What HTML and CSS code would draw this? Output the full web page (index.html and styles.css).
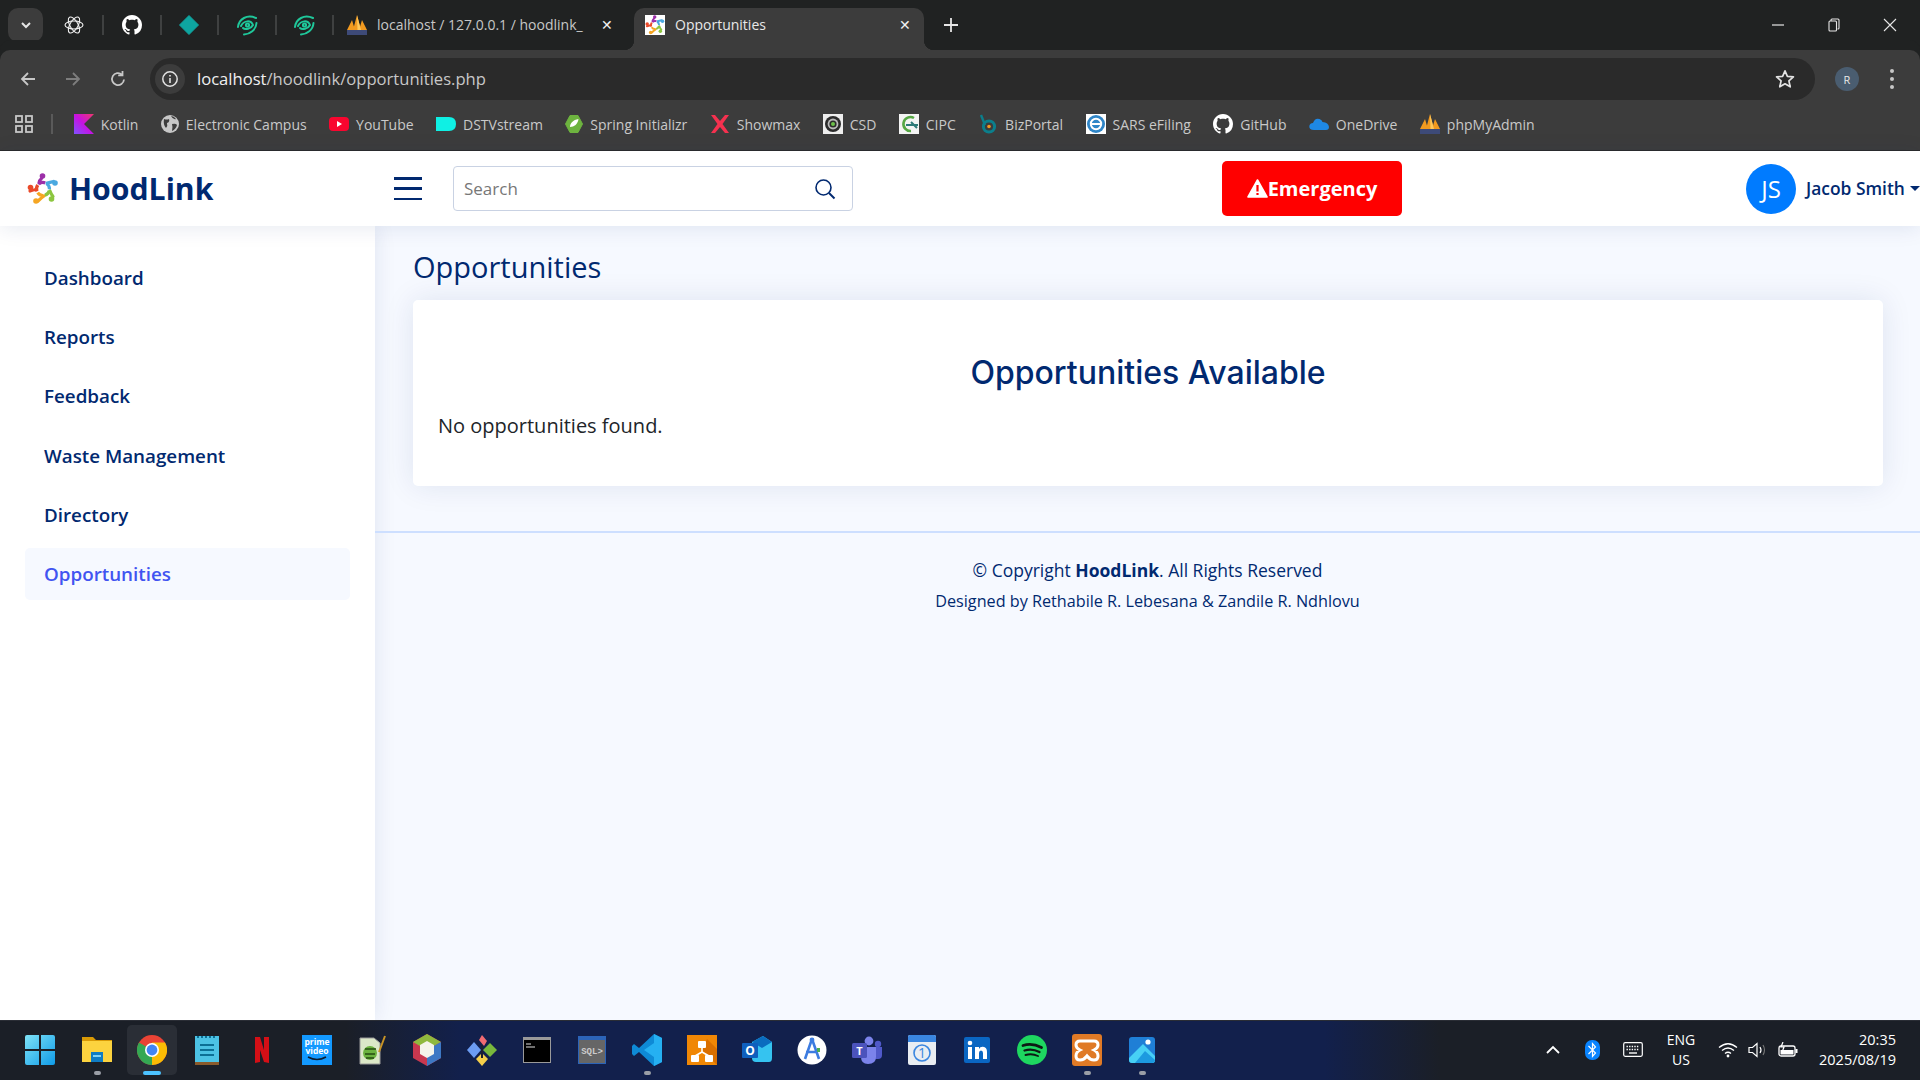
FILE: index.html
```html
<!DOCTYPE html>
<html lang="en">
<head>
    <meta charset="UTF-8">
    <title>Opportunities</title>
    <link rel="stylesheet" href="styles.css">
</head>
<body>
    <!-- Shared icons -->
    <svg class="icon-defs" aria-hidden="true">
        <symbol id="i-logo" viewBox="0 0 32 32">
            <g fill="none" stroke-width="3.2" stroke-linecap="round">
                <path stroke="#9c2fa8" d="M12 10 Q12.5 7 14.5 5.5"/>
                <path stroke="#4aa8e0" d="M20 10 Q23 9.5 26.5 8.5"/>
                <path stroke="#8cc63f" d="M23 18 Q24 21 26 23.5"/>
                <path stroke="#f5a623" d="M17 23 Q14 25 11 28"/>
                <path stroke="#ea4a2a" d="M9 16.5 Q6 17 3 18"/>
            </g>
            <g fill="none" stroke-width="3.2">
                <circle cx="16" cy="16" r="6.5" stroke="#9c2fa8" stroke-dasharray="6.5 34.3" transform="rotate(-130 16 16)"/>
                <circle cx="16" cy="16" r="6.5" stroke="#4aa8e0" stroke-dasharray="6.5 34.3" transform="rotate(-58 16 16)"/>
                <circle cx="16" cy="16" r="6.5" stroke="#8cc63f" stroke-dasharray="6.5 34.3" transform="rotate(14 16 16)"/>
                <circle cx="16" cy="16" r="6.5" stroke="#f5a623" stroke-dasharray="6.5 34.3" transform="rotate(86 16 16)"/>
                <circle cx="16" cy="16" r="6.5" stroke="#ea4a2a" stroke-dasharray="6.5 34.3" transform="rotate(158 16 16)"/>
            </g>
            <circle cx="15.5" cy="3" r="2.8" fill="#9c2fa8"/>
            <circle cx="28" cy="10" r="2.8" fill="#4aa8e0"/>
            <circle cx="24.5" cy="26" r="2.8" fill="#8cc63f"/>
            <circle cx="9" cy="28" r="2.8" fill="#f5a623"/>
            <circle cx="3.5" cy="14.5" r="2.8" fill="#ea4a2a"/>
        </symbol>
        <symbol id="i-github" viewBox="0 0 16 16">
            <path fill="#fff" d="M8 0C3.58 0 0 3.58 0 8c0 3.54 2.29 6.53 5.47 7.59.4.07.55-.17.55-.38 0-.19-.01-.82-.01-1.49-2.01.37-2.53-.49-2.69-.94-.09-.23-.48-.94-.82-1.13-.28-.15-.68-.52-.01-.53.63-.01 1.08.58 1.23.82.72 1.21 1.87.87 2.33.66.07-.52.28-.87.51-1.07-1.78-.2-3.64-.89-3.64-3.95 0-.87.31-1.59.82-2.15-.08-.2-.36-1.02.08-2.12 0 0 .67-.21 2.2.82.64-.18 1.32-.27 2-.27.68 0 1.36.09 2 .27 1.53-1.04 2.2-.82 2.2-.82.44 1.1.16 1.92.08 2.12.51.56.82 1.27.82 2.15 0 3.07-1.87 3.75-3.65 3.95.29.25.54.73.54 1.48 0 1.07-.01 1.93-.01 2.2 0 .21.15.46.55.38A8.013 8.013 0 0016 8c0-4.42-3.58-8-8-8z"/>
        </symbol>
        <symbol id="i-pma" viewBox="0 0 20 20">
            <path fill="#f29a1f" d="M0 15 L5 5 L8 15Z M6 15 L10 0 L14 15Z M12 15 L15 5 L20 15Z"/>
            <path fill="#ffc85a" d="M10 0 L14 15 L10.5 15Z"/>
            <rect y="15" width="20" height="5" fill="#3d4a78"/>
        </symbol>
        <symbol id="i-eye" viewBox="0 0 22 22">
            <g fill="none" stroke="#1fc79a" stroke-width="2" stroke-linecap="round">
                <path d="M2 13 C3 5 11 0 20 4"/>
                <path d="M20.5 9 C20 16 14 20 8 20.5"/>
                <path d="M5 12 C8 6 15 6 17 11 C15 15 9 16 7 14"/>
                <circle cx="11.5" cy="11" r="1.6"/>
            </g>
        </symbol>
    </svg>

    <!-- Browser tabs -->
    <div class="tabstrip">
        <button class="tab-search">
            <svg width="12" height="12" viewBox="0 0 12 12"><path d="M2 4 L6 8 L10 4" fill="none" stroke="#e6e6e6" stroke-width="2"/></svg>
        </button>
        <div class="pin">
            <svg width="20" height="20" viewBox="0 0 20 20"><g fill="none" stroke="#f2f2f2" stroke-width="1.1"><ellipse cx="10" cy="10" rx="9" ry="4"/><ellipse cx="10" cy="10" rx="9" ry="4" transform="rotate(60 10 10)"/><ellipse cx="10" cy="10" rx="9" ry="4" transform="rotate(120 10 10)"/></g></svg>
        </div>
        <span class="tab-sep"></span>
        <div class="pin"><svg width="20" height="20"><use href="#i-github"/></svg></div>
        <span class="tab-sep"></span>
        <div class="pin">
            <svg width="20" height="20" viewBox="0 0 20 20"><path d="M10 0.5 L19.5 10 L10 19.5 L0.5 10Z" fill="#0ea5a0" stroke="#0ea5a0" stroke-linejoin="round"/></svg>
        </div>
        <span class="tab-sep"></span>
        <div class="pin"><svg width="22" height="22"><use href="#i-eye"/></svg></div>
        <span class="tab-sep"></span>
        <div class="pin"><svg width="22" height="22"><use href="#i-eye"/></svg></div>
        <span class="tab-sep"></span>

        <div class="tab">
            <svg width="20" height="20"><use href="#i-pma"/></svg>
            <span class="tab-title tab-title-fade">localhost / 127.0.0.1 / hoodlink_</span>
            <span class="tab-close">&#10005;</span>
        </div>
        <div class="tab tab-active">
            <svg class="favicon" width="20" height="20"><use href="#i-logo"/></svg>
            <span class="tab-title">Opportunities</span>
            <span class="tab-close">&#10005;</span>
        </div>
        <svg class="new-tab" width="14" height="14" viewBox="0 0 14 14"><path d="M7 0 V14 M0 7 H14" stroke="#e6e6e6" stroke-width="1.8"/></svg>

        <div class="window-controls">
            <svg width="14" height="14" viewBox="0 0 14 14"><path d="M1 7 H13" stroke="#e6e6e6" stroke-width="1.2"/></svg>
            <svg width="14" height="14" viewBox="0 0 14 14"><path d="M4 3 V2 Q4 1 5 1 H11 Q12 1 12 2 V10 Q12 11 11 11 H10.5 M2 4 Q2 3 3 3 H8.5 Q9.5 3 9.5 4 V12 Q9.5 13 8.5 13 H3 Q2 13 2 12Z" fill="none" stroke="#e6e6e6" stroke-width="1.1"/></svg>
            <svg width="14" height="14" viewBox="0 0 14 14"><path d="M1 1 L13 13 M13 1 L1 13" stroke="#e6e6e6" stroke-width="1.1"/></svg>
        </div>
    </div>

    <!-- Address bar -->
    <div class="toolbar">
        <svg class="nav-btn" width="18" height="18" viewBox="0 0 18 18"><path d="M16 9 H3 M9 3 L3 9 L9 15" fill="none" stroke="#c7c7c7" stroke-width="1.8"/></svg>
        <svg class="nav-btn" width="18" height="18" viewBox="0 0 18 18"><path d="M2 9 H15 M9 3 L15 9 L9 15" fill="none" stroke="#7d7d7d" stroke-width="1.8"/></svg>
        <svg class="nav-btn" width="18" height="18" viewBox="0 0 18 18"><path d="M15 9.5 A6 6 0 1 1 13 4.6 M13.5 1 V5.3 H9.2" fill="none" stroke="#c7c7c7" stroke-width="1.8"/></svg>
        <div class="omnibox">
            <span class="site-info">
                <svg width="18" height="18" viewBox="0 0 18 18"><circle cx="9" cy="9" r="7.2" fill="none" stroke="#e3e3e3" stroke-width="1.5"/><path d="M9 8 V13 M9 5 V6.6" stroke="#e3e3e3" stroke-width="1.6"/></svg>
            </span>
            <span class="url"><b>localhost</b>/hoodlink/opportunities.php</span>
            <svg class="star" width="20" height="20" viewBox="0 0 20 20"><path d="M10 1.8 L12.4 7.3 L18.4 7.9 L13.9 11.9 L15.2 17.8 L10 14.8 L4.8 17.8 L6.1 11.9 L1.6 7.9 L7.6 7.3Z" fill="none" stroke="#e3e3e3" stroke-width="1.7" stroke-linejoin="round"/></svg>
        </div>
        <span class="profile">R</span>
        <span class="menu-dots"><i></i><i></i><i></i></span>
    </div>

    <!-- Bookmarks -->
    <div class="bookmarks">
        <svg class="apps" width="18" height="18" viewBox="0 0 18 18"><g fill="none" stroke="#c7c7c7" stroke-width="1.8"><rect x="1" y="1" width="6" height="6"/><rect x="11" y="1" width="6" height="6"/><rect x="1" y="11" width="6" height="6"/><rect x="11" y="11" width="6" height="6"/></g></svg>
        <span class="bm-sep"></span>
        <a class="bm bm-kotlin">
            <svg width="20" height="20" viewBox="0 0 20 20"><defs><linearGradient id="kt" x1="0" y1="1" x2="1" y2="0"><stop offset="0" stop-color="#7f52ff"/><stop offset=".5" stop-color="#c711e1"/><stop offset="1" stop-color="#f0386b"/></linearGradient></defs><path d="M0 0 H20 L10 10 L20 20 H0Z" fill="url(#kt)"/></svg>
            Kotlin</a>
        <a class="bm">
            <svg width="18" height="18" viewBox="0 0 18 18"><circle cx="9" cy="9" r="9" fill="#c7c7c7"/><path d="M3 4 Q6 5 8 4 Q9 7 6 8 Q7 11 5 13 Q2 10 3 4Z M11 9 Q15 8 16 10 Q15 14 11 16 Q12 12 11 9Z M10 1 Q13 1 15 4 Q12 5 10 1Z" fill="#3c3c3c"/></svg>
            Electronic Campus</a>
        <a class="bm">
            <svg width="20" height="16" viewBox="0 0 20 16"><rect width="20" height="14" y="1" rx="4" fill="#f9062f"/><path d="M8 5 L13 8 L8 11Z" fill="#fff"/></svg>
            YouTube</a>
        <a class="bm">
            <svg width="20" height="14" viewBox="0 0 20 14"><path d="M0 0 H13 Q20 0 20 7 Q20 14 13 14 H0Z" fill="#0ff0e4"/></svg>
            DSTVstream</a>
        <a class="bm">
            <svg width="18" height="18" viewBox="0 0 18 18"><path d="M5 0.5 H13 L17.5 9 L13 17.5 H5 L0.5 9Z" fill="#6db33f" stroke="#6db33f" stroke-linejoin="round"/><path d="M13.5 4 C13 9 9 12 5 12 C5 8 8 5 13.5 4Z" fill="#fff"/></svg>
            Spring Initializr</a>
        <a class="bm">
            <svg width="20" height="20" viewBox="0 0 20 20"><path d="M1 1 H5 L10 7 L15 1 H19 L12.5 10 L19 19 H15 L10 13 L5 19 H1 L7.5 10Z" fill="#f5314f"/></svg>
            Showmax</a>
        <a class="bm">
            <svg width="20" height="20" viewBox="0 0 20 20"><rect width="20" height="20" fill="#eee"/><circle cx="10" cy="10" r="8" fill="#2b2b2b"/><circle cx="10" cy="10" r="5.4" fill="#bbb"/><circle cx="10" cy="10" r="3.6" fill="#2b2b2b"/><circle cx="10" cy="10" r="2" fill="#6cc04a"/></svg>
            CSD</a>
        <a class="bm">
            <svg width="20" height="20" viewBox="0 0 20 20"><rect width="20" height="20" fill="#f4f4f4"/><path d="M15 4 A7 7 0 1 0 12 17" fill="none" stroke="#57a845" stroke-width="2.6"/><path d="M7 11 H19 M12 8 L18 14" stroke="#2d7a78" stroke-width="2"/></svg>
            CIPC</a>
        <a class="bm">
            <svg width="20" height="20" viewBox="0 0 20 20"><path d="M3 1 L7 11" stroke="#0b7f8c" stroke-width="2.4" fill="none"/><circle cx="11" cy="12.5" r="5.6" fill="none" stroke="#0b7f8c" stroke-width="3"/><circle cx="11" cy="12.5" r="1.8" fill="#f29a1f"/></svg>
            BizPortal</a>
        <a class="bm bm-sars">
            <svg width="20" height="20" viewBox="0 0 20 20"><rect width="20" height="20" fill="#fff"/><circle cx="10" cy="10" r="9" fill="#2f86c8"/><circle cx="10" cy="10" r="5.2" fill="none" stroke="#fff" stroke-width="2"/><path d="M5 10 H15" stroke="#fff" stroke-width="2"/></svg>
            SARS eFiling</a>
        <a class="bm">
            <svg width="20" height="20"><use href="#i-github"/></svg>
            GitHub</a>
        <a class="bm">
            <svg width="20" height="16" viewBox="0 0 20 16"><path d="M5 14 Q0 14 0.3 10 Q1 7 4 7 Q6 1.5 10.5 3 Q13 4 13.5 6 Q19.5 6.5 20 11 Q20 14 17 14Z" fill="#1e88e5"/></svg>
            OneDrive</a>
        <a class="bm">
            <svg width="20" height="20"><use href="#i-pma"/></svg>
            phpMyAdmin</a>
    </div>

    <!-- Site header -->
    <header class="header">
        <a class="logo">
            <svg width="32" height="32"><use href="#i-logo"/></svg>
            <span>HoodLink</span>
        </a>
        <button class="menu-toggle"><i></i><i></i><i></i></button>
        <div class="search-bar">
            <span class="search-text">Search</span>
            <svg width="22" height="22" viewBox="0 0 22 22"><circle cx="9.5" cy="9.5" r="7.5" fill="none" stroke="#012970" stroke-width="1.6"/><path d="M15 15 L20.5 20.5" stroke="#012970" stroke-width="2"/></svg>
        </div>
        <button class="emergency">
            <svg width="21" height="19" viewBox="0 0 21 19"><path d="M10.5 1 L20 18 H1Z" fill="#fff" stroke="#fff" stroke-width="1.6" stroke-linejoin="round"/><path d="M10.5 6 V12.5 M10.5 14 V16" stroke="#f00" stroke-width="2.2"/></svg>Emergency
        </button>
        <div class="user">
            <span class="avatar">JS</span>
            <span class="user-name">Jacob Smith</span>
            <span class="caret"></span>
        </div>
    </header>

    <div class="app">
        <!-- Sidebar -->
        <nav class="sidebar">
            <a class="side-link">Dashboard</a>
            <a class="side-link">Reports</a>
            <a class="side-link">Feedback</a>
            <a class="side-link">Waste Management</a>
            <a class="side-link">Directory</a>
            <a class="side-link side-link-active">Opportunities</a>
        </nav>

        <main class="main">
            <div class="content">
                <h1 class="page-title">Opportunities</h1>
                <section class="card">
                    <h2 class="card-title">Opportunities Available</h2>
                    <p class="card-text">No opportunities found.</p>
                </section>
            </div>
            <footer class="footer">
                <div class="copyright">&copy; Copyright <strong>HoodLink</strong>. All Rights Reserved</div>
                <div class="credits">Designed by Rethabile R. Lebesana &amp; Zandile R. Ndhlovu</div>
            </footer>
        </main>
    </div>

    <!-- Windows taskbar -->
    <div class="taskbar">
        <div class="task-slot task-start">
            <svg width="32" height="32" viewBox="0 0 32 32"><defs><linearGradient id="win" x1="0" y1="0" x2="1" y2="1"><stop offset="0" stop-color="#7fe3f7"/><stop offset="1" stop-color="#0f9be8"/></linearGradient></defs><path d="M1 3 Q1 1 3 1 H15 V15 H1Z M17 1 H29 Q31 1 31 3 V15 H17Z M1 17 H15 V31 H3 Q1 31 1 29Z M17 17 H31 V29 Q31 31 29 31 H17Z" fill="url(#win)"/></svg>
        </div>
        <div class="task-slot">
            <svg width="30" height="30" viewBox="0 0 30 30"><path d="M0 2 H11 L14 5 H30 V26 H0Z" fill="#d99a05"/><rect y="6" width="30" height="21" fill="#fcd33f"/><path d="M9 17 H21 V27 H9Z" fill="#0f7cc4"/><rect x="11" y="20" width="8" height="2" fill="#7fd1f5"/></svg>
            <i class="task-dot"></i>
        </div>
        <div class="task-slot task-current">
            <svg width="30" height="30" viewBox="0 0 30 30"><circle cx="15" cy="15" r="15" fill="#ea4335"/><path d="M15 15 L2 7.5 A15 15 0 0 0 15 30Z" fill="#34a853"/><path d="M15 15 L15 30 A15 15 0 0 0 28 7.5 L15 7.5Z" fill="#fbbc04"/><circle cx="15" cy="15" r="7" fill="#fff"/><circle cx="15" cy="15" r="5.4" fill="#4285f4"/></svg>
            <i class="task-dot task-dot-active"></i>
        </div>
        <div class="task-slot">
            <svg width="24" height="30" viewBox="0 0 24 30"><rect y="1" width="24" height="28" fill="#4cc2e4"/><rect y="27" width="24" height="3" fill="#8a5a2b"/><path d="M5 10 H19 M5 15 H19 M5 20 H19" stroke="#0c6f95" stroke-width="2.2"/><path d="M2 2 H22" stroke="#0c6f95" stroke-width="2" stroke-dasharray="2 2"/></svg>
        </div>
        <div class="task-slot">
            <svg width="14" height="26" viewBox="0 0 14 26"><path d="M0 0 H5 L9 13 V0 H14 V26 L9 25 L5 13 V25 L0 26Z" fill="#d40f16"/></svg>
        </div>
        <div class="task-slot">
            <svg width="30" height="30" viewBox="0 0 30 30"><rect width="30" height="30" fill="#1399ff"/><text x="15" y="10" class="prime-text">prime</text><text x="15" y="18.5" class="prime-text">video</text><path d="M6 22 Q15 27 24 22" fill="none" stroke="#0b1b2d" stroke-width="1.6"/></svg>
        </div>
        <div class="task-slot">
            <svg width="30" height="32" viewBox="0 0 30 32"><path d="M3 4 H17 L23 9 V30 H3Z" fill="#dce8c8" stroke="#999"/><circle cx="13" cy="19" r="7" fill="#6cb33f"/><path d="M8 15 H19 M8 20 H18 M9 24 H17" stroke="#264d12" stroke-width="1.4"/><path d="M22 18 L28 2" stroke="#c99425" stroke-width="2"/></svg>
        </div>
        <div class="task-slot">
            <svg width="28" height="32" viewBox="0 0 28 32"><path d="M14 0 L28 8 V24 L14 32 L0 24 V8Z" fill="#c8374f"/><path d="M14 0 L28 8 L14 16 L0 8Z" fill="#8fb93e"/><path d="M14 16 L28 8 V24 L14 32Z" fill="#3d78c4"/><path d="M14 7 L21 11 V20 L14 24 L7 20 V11Z" fill="#f4f4ea"/></svg>
        </div>
        <div class="task-slot">
            <svg width="30" height="32" viewBox="0 0 30 32"><path d="M12 6 L15 1 L20 7 L17 12Z" fill="#f26b72"/><path d="M7 8 L14 16 L7 24 L0 16Z" fill="#6c9cf2"/><path d="M23 9 L30 16 L23 23 L16 16Z" fill="#78b83c"/><path d="M15 19 L21 25 L15 32 L9 25Z" fill="#f5cf4a"/><path d="M15 11 V24" stroke="#1c2030" stroke-width="2"/></svg>
        </div>
        <div class="task-slot">
            <svg width="28" height="26" viewBox="0 0 28 26"><rect width="28" height="26" fill="#9a9a9a"/><rect x="1" y="3" width="26" height="22" fill="#000"/><path d="M3 7 H8 M3 10 H12" stroke="#ddd" stroke-width="1.2"/></svg>
        </div>
        <div class="task-slot">
            <svg width="28" height="28" viewBox="0 0 28 28"><rect width="28" height="28" fill="#2c64b8"/><rect x="1" y="4" width="26" height="23" fill="#666"/><text x="14" y="18" class="sql-text">SQL&gt;</text></svg>
        </div>
        <div class="task-slot">
            <svg width="30" height="32" viewBox="0 0 30 32"><path d="M22 0 L30 4 V28 L22 32 L7 18 L2 22 L0 20 V12 L2 10 L7 14Z" fill="#0e8ad6"/><path d="M22 0 L30 4 V28 L22 32Z M22 9 L12 16 L22 23Z" fill="#25b0f2" fill-rule="evenodd"/></svg>
            <i class="task-dot"></i>
        </div>
        <div class="task-slot">
            <svg width="30" height="30" viewBox="0 0 30 30"><rect width="30" height="30" fill="#f08705"/><path d="M15 15 L30 30 V14 L20 4Z" fill="#d96f00"/><path d="M15 13 V17 M15 17 L8 21 M15 17 L22 21" stroke="#fff" stroke-width="1.6" fill="none"/><rect x="11" y="6" width="8" height="7" rx="1" fill="#fff"/><rect x="4" y="20" width="8" height="7" rx="1" fill="#fff"/><rect x="18" y="20" width="8" height="7" rx="1" fill="#fff"/></svg>
        </div>
        <div class="task-slot">
            <svg width="30" height="30" viewBox="0 0 30 30"><path d="M10 7 L21 1 L30 7 V23 Q30 27 27 27 H14 Q10 27 10 23Z" fill="#35c3f0"/><path d="M10 7 L21 1 L30 7 L20 13Z" fill="#0a6cbf"/><rect y="8" width="16" height="15" rx="1" fill="#0f5fbd"/><text x="8" y="20" class="outlook-text">O</text></svg>
        </div>
        <div class="task-slot">
            <svg width="30" height="30" viewBox="0 0 30 30"><circle cx="15" cy="15" r="14.5" fill="#fff"/><path d="M15 4 L22 24 M15 4 L8 24 M9 17 H21" stroke="#3d7ce0" stroke-width="2.6" fill="none"/><circle cx="15" cy="5" r="2.4" fill="#3d7ce0"/><rect x="20" y="13" width="3" height="4" fill="#4caf50"/></svg>
        </div>
        <div class="task-slot">
            <svg width="30" height="28" viewBox="0 0 30 28"><circle cx="17" cy="5" r="4.4" fill="#7b83eb"/><circle cx="26" cy="8" r="3.2" fill="#5059c9"/><path d="M21 11 H30 V19 Q30 23 26 23 H21Z" fill="#5059c9"/><path d="M9 11 H24 V21 Q24 28 16 28 Q9 28 9 21Z" fill="#7b83eb"/><rect y="7" width="15" height="15" rx="1.5" fill="#4b53bc"/><text x="7.5" y="19" class="teams-text">T</text></svg>
        </div>
        <div class="task-slot">
            <svg width="28" height="30" viewBox="0 0 28 30"><rect width="28" height="30" rx="2" fill="#e9edf2"/><path d="M0 2 Q0 0 2 0 H26 Q28 0 28 2 V7 H0Z" fill="#3a86e0"/><circle cx="14" cy="18" r="8" fill="none" stroke="#3a86e0" stroke-width="1.6"/><text x="14" y="23" class="cal-text">1</text></svg>
        </div>
        <div class="task-slot">
            <svg width="26" height="26" viewBox="0 0 26 26"><rect width="26" height="26" rx="2" fill="#0a66c2"/><rect x="4" y="10" width="4" height="12" fill="#fff"/><circle cx="6" cy="6" r="2.3" fill="#fff"/><path d="M11 10 H15 V12 Q16 9.6 19 9.8 Q23 10 23 15 V22 H19 V16 Q19 13.5 17 13.5 Q15 13.5 15 16 V22 H11Z" fill="#fff"/></svg>
        </div>
        <div class="task-slot">
            <svg width="30" height="30" viewBox="0 0 30 30"><circle cx="15" cy="15" r="15" fill="#1ed760"/><g fill="none" stroke="#0d1a14" stroke-linecap="round"><path d="M6 10.5 Q15 7.5 24.5 12.5" stroke-width="2.8"/><path d="M7.5 15.5 Q15 13 22.5 17" stroke-width="2.3"/><path d="M8.5 20 Q15 18 21 21" stroke-width="1.9"/></g></svg>
        </div>
        <div class="task-slot">
            <svg width="30" height="32" viewBox="0 0 30 32"><rect width="30" height="32" rx="3" fill="#e07a26"/><path d="M8 7 H22 Q26 7 26 11 Q26 14 22 16 Q26 18 26 22 Q26 26 22 26 Q18 26 15 22 Q12 26 8 26 Q4 26 4 22 Q4 18 8 16 Q4 14 4 11 Q4 7 8 7Z" fill="none" stroke="#fff" stroke-width="3"/></svg>
            <i class="task-dot"></i>
        </div>
        <div class="task-slot">
            <svg width="26" height="32" viewBox="0 0 26 32"><rect y="3" width="26" height="26" rx="3" fill="#1f7fd6"/><path d="M0 24 L14 10 L26 22 V26 Q26 29 23 29 H3 Q0 29 0 26Z" fill="#47d0f5"/><path d="M6 29 L16 17 L26 26 V26 Q26 29 23 29Z" fill="#1c9ae0"/><circle cx="19" cy="8" r="2.6" fill="#fff"/></svg>
            <i class="task-dot"></i>
        </div>

        <div class="tray">
            <svg class="tray-chevron" width="14" height="9" viewBox="0 0 14 9"><path d="M1 8 L7 2 L13 8" fill="none" stroke="#fff" stroke-width="1.8"/></svg>
            <svg class="tray-bt" width="15" height="20" viewBox="0 0 15 20"><rect width="15" height="20" rx="7" fill="#0a84ff"/><path d="M3.5 6 L10.5 13 L7.5 16.5 V3.5 L10.5 7 L3.5 14" fill="none" stroke="#fff" stroke-width="1.2"/></svg>
            <svg class="tray-kbd" width="20" height="15" viewBox="0 0 20 15"><rect x=".7" y=".7" width="18.6" height="13.6" rx="1.5" fill="none" stroke="#fff" stroke-width="1.2"/><path d="M3.5 4.5 H16.5 M3.5 7.5 H16.5" stroke="#fff" stroke-width="1.4" stroke-dasharray="1.4 1.2"/><path d="M6 11 H14" stroke="#fff" stroke-width="1.4"/></svg>
            <div class="tray-lang"><span>ENG</span><span>US</span></div>
            <svg class="tray-wifi" width="20" height="16" viewBox="0 0 20 16"><g fill="none" stroke="#fff" stroke-width="1.3"><path d="M1 5.5 Q10 -2 19 5.5"/><path d="M4 8.5 Q10 3.5 16 8.5"/><path d="M7 11.5 Q10 9 13 11.5"/></g><circle cx="10" cy="14" r="1.4" fill="#fff"/></svg>
            <svg class="tray-vol" width="20" height="16" viewBox="0 0 20 16"><path d="M1 5.5 H4.5 L9 1.5 V14.5 L4.5 10.5 H1Z" fill="none" stroke="#fff" stroke-width="1.2"/><path d="M12 5 Q14 8 12 11" fill="none" stroke="#fff" stroke-width="1.2"/><path d="M15 3 Q18 8 15 13" fill="none" stroke="#777" stroke-width="1.1"/></svg>
            <svg class="tray-batt" width="20" height="16" viewBox="0 0 20 16"><rect x="1" y="4" width="16" height="10" rx="2" fill="none" stroke="#fff" stroke-width="1.3"/><rect x="2.5" y="8" width="13" height="4.5" fill="#fff"/><rect x="17.5" y="7" width="2" height="4" fill="#fff"/><path d="M5 0 L3 5 H6 L4.5 9" fill="none" stroke="#fff" stroke-width="1.2"/></svg>
            <div class="tray-clock"><span>20:35</span><span>2025/08/19</span></div>
        </div>
    </div>
</body>
</html>
```

FILE: styles.css
```css
/* Global */
* {
    box-sizing: border-box;
}

body {
    margin: 0;
    width: 1920px;
    height: 1080px;
    overflow: hidden;
    display: flex;
    flex-direction: column;
    font-family: "Open Sans", sans-serif;
    background: #f6f9ff;
}

button {
    border: none;
    padding: 0;
    font-family: inherit;
}

.icon-defs {
    width: 0;
    height: 0;
    display: block;
}

/* Tab strip */
.tabstrip {
    height: 50px;
    flex: none;
    display: flex;
    align-items: center;
    padding-left: 8px;
    background: #202222;
    color: #e3e3e3;
    font-size: 14px;
}

.tab-search {
    width: 35px;
    height: 34px;
    margin-right: 3.5px;
    display: flex;
    align-items: center;
    justify-content: center;
    border-radius: 10px;
    background: #3c3c3c;
}

.pin {
    width: 55.5px;
    height: 34px;
    display: flex;
    align-items: center;
    justify-content: center;
}

.tab-sep {
    width: 2px;
    height: 20px;
    background: #3f4141;
}

.tab {
    width: 290px;
    height: 42px;
    margin-top: 8px;
    margin-right: 10px;
    padding: 0 10px 8px 13px;
    display: flex;
    align-items: center;
    gap: 10px;
    border-radius: 10px 10px 0 0;
}

.tab-title {
    flex: 1;
    white-space: nowrap;
    overflow: hidden;
    padding-bottom: 1px;
}

.tab-title-fade {
    color: #c7c7c7;
}

.tab-close {
    width: 14px;
    font-size: 14px;
    line-height: 14px;
    text-align: center;
    color: #f0f0f0;
}

.tab-active {
    position: relative;
    padding-right: 12px;
    padding-left: 11px;
    background: #3c3c3c;
    color: #e8e8e8;
}

.tab-active::before,
.tab-active::after {
    content: "";
    position: absolute;
    bottom: 0;
    width: 10px;
    height: 10px;
}

.tab-active::before {
    left: -10px;
    background: radial-gradient(circle at 0 0, transparent 10px, #3c3c3c 10.5px);
}

.tab-active::after {
    right: -10px;
    background: radial-gradient(circle at 100% 0, transparent 10px, #3c3c3c 10.5px);
}

.favicon {
    background: #fff;
}

.new-tab {
    margin-left: 10px;
}

.window-controls {
    margin-left: auto;
    padding-right: 23px;
    display: flex;
    gap: 42px;
}

/* Toolbar */
.toolbar {
    height: 54px;
    flex: none;
    display: flex;
    align-items: center;
    padding: 4px 0 0 19px;
    background: #3c3c3c;
    border-radius: 10px 10px 0 0;
    box-shadow: 0 -10px 0 #202222;
}

.nav-btn {
    margin-right: 27px;
}

.nav-btn:nth-child(3) {
    margin-right: 23px;
}

.omnibox {
    width: 1665px;
    height: 42px;
    display: flex;
    align-items: center;
    padding: 0 20px 0 5px;
    border-radius: 21px;
    background: #2a2a2a;
    color: #c7c7c7;
    font-size: 16.6px;
}

.site-info {
    width: 30px;
    height: 30px;
    margin-right: 12px;
    display: flex;
    align-items: center;
    justify-content: center;
    border-radius: 50%;
    background: #3c3c3c;
}

.url {
    flex: 1;
    padding-bottom: 1px;
}

.url b {
    font-weight: 400;
    color: #f0f0f0;
}

.profile {
    width: 24px;
    height: 24px;
    margin-left: 20px;
    display: flex;
    align-items: center;
    justify-content: center;
    border-radius: 50%;
    background: #4a5d70;
    color: #e8e8e8;
    font-size: 11px;
}

.menu-dots {
    margin-left: 31px;
    display: flex;
    flex-direction: column;
    gap: 4px;
}

.menu-dots i {
    width: 4px;
    height: 4px;
    border-radius: 50%;
    background: #c7c7c7;
}

/* Bookmarks */
.bookmarks {
    height: 47px;
    flex: none;
    display: flex;
    align-items: center;
    gap: 22.4px;
    padding: 0 0 6px 15px;
    background: #3c3c3c;
    border-bottom: 1px solid #2b2b2b;
    color: #c9c9c9;
    font-size: 14px;
}

.apps {
    margin-right: -4px;
}

.bm-sep {
    width: 2px;
    height: 20px;
    margin-right: -2px;
    background: #5a5a5a;
}

.bm {
    display: flex;
    align-items: center;
    gap: 7px;
    white-space: nowrap;
}

/* Site header */
.header {
    height: 75px;
    flex: none;
    display: flex;
    align-items: center;
    position: relative;
    z-index: 2;
    background: #fff;
    box-shadow: 0 2px 20px rgba(1, 41, 112, 0.1);
}

.logo {
    width: 394px;
    padding-left: 27px;
    display: flex;
    align-items: center;
    gap: 10px;
    color: #012970;
    font-size: 30.2px;
    font-weight: 700;
}

.menu-toggle {
    width: 28px;
    height: 23px;
    display: flex;
    flex-direction: column;
    justify-content: space-between;
    background: none;
}

.menu-toggle i {
    height: 2.5px;
    background: #012970;
}

.search-bar {
    width: 400px;
    height: 45px;
    margin-left: 31px;
    padding: 0 16px 0 10px;
    display: flex;
    align-items: center;
    justify-content: space-between;
    border: 1px solid #c9d2e3;
    border-radius: 4px;
    color: #777;
    font-size: 17px;
}

.search-text {
    padding-bottom: 1px;
}

.emergency {
    width: 180px;
    height: 55px;
    margin-left: 369px;
    display: flex;
    align-items: center;
    justify-content: center;
    border-radius: 5px;
    background: #f00;
    color: #fff;
    font-size: 20px;
    font-weight: 700;
}

.user {
    margin-left: 344px;
    display: flex;
    align-items: center;
    gap: 10px;
    color: #012970;
    white-space: nowrap;
}

.avatar {
    width: 50px;
    height: 50px;
    display: flex;
    align-items: center;
    justify-content: center;
    border-radius: 50%;
    background: #007bff;
    color: #fff;
    font-size: 24px;
}

.user-name {
    padding-bottom: 2px;
    font-size: 17.4px;
    font-weight: 600;
}

.caret {
    width: 0;
    height: 0;
    margin-left: -5px;
    border-top: 5px solid #012970;
    border-left: 5px solid transparent;
    border-right: 5px solid transparent;
}

/* Layout */
.app {
    flex: 1;
    display: flex;
    min-height: 0;
}

/* Sidebar */
.sidebar {
    width: 375px;
    flex: none;
    padding: 26px 25px 0;
    display: flex;
    flex-direction: column;
    gap: 7.2px;
    background: #fff;
    box-shadow: 0 0 20px rgba(1, 41, 112, 0.1);
}

.side-link {
    height: 52px;
    padding-left: 19px;
    display: flex;
    align-items: center;
    border-radius: 5px;
    color: #012970;
    font-size: 18.8px;
    font-weight: 600;
}

.side-link-active {
    background: #f6f9ff;
    color: #4154f1;
}

/* Main */
.main {
    flex: 1;
    display: flex;
    flex-direction: column;
}

.content {
    height: 305px;
    padding: 20px 37px 0 38px;
}

.page-title {
    margin: 0 0 13px;
    color: #012970;
    font-size: 29px;
    font-weight: 500;
    line-height: 41px;
}

.card {
    height: 186px;
    padding: 51px 25px 0;
    border-radius: 5px;
    background: #fff;
    box-shadow: 0 0 30px rgba(1, 41, 112, 0.1);
}

.card-title {
    margin: 0 0 16px;
    text-align: center;
    color: #012970;
    font-family: Inter, sans-serif;
    font-size: 32px;
    font-weight: 500;
    line-height: 44px;
}

.card-text {
    margin: 0;
    color: #212529;
    font-size: 20px;
    line-height: 30px;
}

.footer {
    border-top: 2px solid #cddfff;
    padding-top: 24px;
    text-align: center;
    color: #012970;
}

.copyright {
    font-size: 17.5px;
    line-height: 27px;
    margin-bottom: 5px;
}

.credits {
    font-size: 16.2px;
    line-height: 24px;
}

/* Taskbar */
.taskbar {
    height: 60px;
    flex: none;
    display: flex;
    align-items: center;
    padding: 0 0 2px 12.5px;
    position: relative;
    z-index: 3;
    border-top: 1px solid #2a2d35;
    background: linear-gradient(90deg, #1b1f27 0%, #1b1f27 18%, #12204c 24%, #12204c 69%, #1b1f27 75%, #1b1f27 100%);
    color: #fff;
    font-size: 14px;
}

.task-slot {
    width: 55px;
    height: 50px;
    flex: none;
    position: relative;
    display: flex;
    align-items: center;
    justify-content: center;
    border-radius: 5px;
}

.task-start {
    margin-right: 2px;
}

.task-current {
    width: 50px;
    margin: 0 2.5px;
    background: #2a2e36;
}

.task-dot {
    position: absolute;
    left: 50%;
    bottom: 0;
    width: 7px;
    height: 4px;
    margin-left: -3px;
    border-radius: 2px;
    background: #9a9ea6;
}

.task-dot-active {
    width: 18px;
    margin-left: -9px;
    background: #4cc2ff;
}

.prime-text {
    font: 700 8.5px "Open Sans", sans-serif;
    fill: #fff;
    text-anchor: middle;
}

.sql-text {
    font: 700 9px "Liberation Mono", monospace;
    fill: #ccc;
    text-anchor: middle;
}

.outlook-text {
    font: 700 12px "Open Sans", sans-serif;
    fill: #fff;
    text-anchor: middle;
}

.teams-text {
    font: 700 11px "Open Sans", sans-serif;
    fill: #fff;
    text-anchor: middle;
}

.cal-text {
    font: 400 14px "Open Sans", sans-serif;
    fill: #3a86e0;
    text-anchor: middle;
}

/* Tray */
.tray {
    margin-left: auto;
    padding-right: 24px;
    display: flex;
    align-items: center;
}

.tray-bt {
    margin-left: 25px;
}

.tray-kbd {
    margin-left: 23px;
}

.tray-lang {
    width: 48px;
    margin-left: 14px;
    display: flex;
    flex-direction: column;
    align-items: center;
    gap: 1px;
}

.tray-wifi {
    margin-left: 13px;
}

.tray-vol {
    margin-left: 10px;
}

.tray-batt {
    margin-left: 10px;
}

.tray-clock {
    margin-left: 21px;
    display: flex;
    flex-direction: column;
    align-items: flex-end;
    font-size: 14.5px;
    line-height: 20px;
}
```
